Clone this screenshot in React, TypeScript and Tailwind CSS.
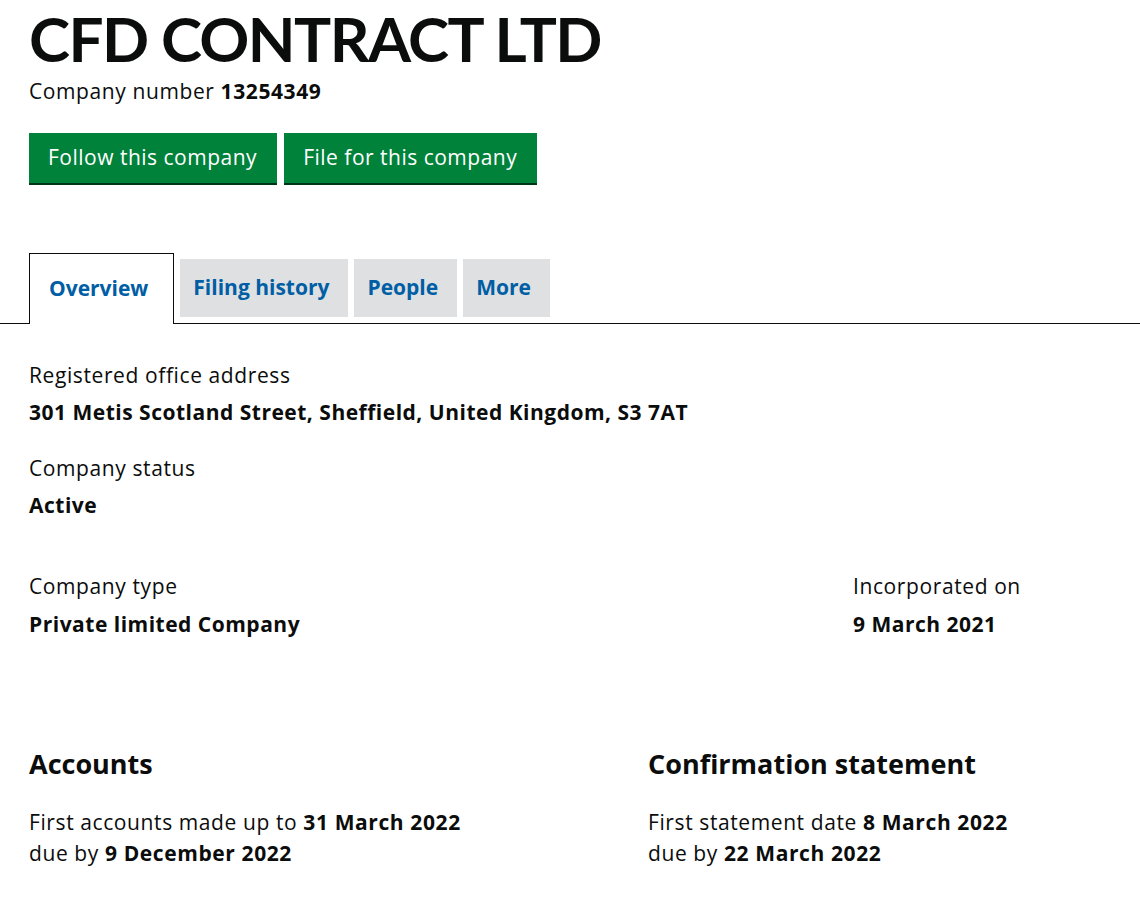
export default function App() {
  return (
    <div className="min-h-[900px] bg-white text-[#0b0c0c] font-['Open_Sans','Noto_Sans',sans-serif]">
      <div className="pl-[29px]">
        <h1 className="font-['Lato',sans-serif] text-[62px] leading-none font-bold pt-[7px] tracking-[-1.6px]">CFD CONTRACT LTD</h1>
        <p className="text-[21px] tracking-[0.6px] mt-[7px] leading-[30px]">
          Company number <strong>13254349</strong>
        </p>
        <div className="flex gap-[7px] mt-[27px]">
          <button className="h-[50px] pl-[19px] pr-[20px] bg-[#00823b] text-white text-[21px] tracking-[0.5px] shadow-[0_2px_0_#003618]">
            Follow this company
          </button>
          <button className="h-[50px] pl-[19px] pr-[20px] bg-[#00823b] text-white text-[21px] tracking-[0.5px] shadow-[0_2px_0_#003618]">
            File for this company
          </button>
        </div>
      </div>

      <div className="mt-[70px] flex items-end pl-[29px] border-b border-[#0b0c0c]">
        <div className="h-[71px] pl-[19px] pr-[25px] flex items-center border border-b-0 border-[#0b0c0c] bg-white -mb-px text-[#005ea5] font-bold text-[21px]">
          Overview
        </div>
        <div className="flex gap-[6px] ml-[6px] mb-[6px]">
          {['Filing history', 'People', 'More'].map(t => (
            <div key={t} className="h-[58px] pl-[13px] pr-[19px] flex items-center bg-[#dee0e2] text-[#005ea5] font-bold text-[21px]">
              {t}
            </div>
          ))}
        </div>
      </div>

      <div className="pl-[29px] pr-[29px] text-[21px] tracking-[0.6px]">
        <dl className="mt-[38px]">
          <dt className="leading-[26px]">Registered office address</dt>
          <dd className="font-bold leading-[26px] mt-[11px] tracking-[0.5px]">301 Metis Scotland Street, Sheffield, United Kingdom, S3 7AT</dd>
          <dt className="leading-[26px] mt-[30px]">Company status</dt>
          <dd className="font-bold leading-[26px] mt-[11px] tracking-[0.5px]">Active</dd>
        </dl>

        <div className="grid grid-cols-[824px_1fr] mt-[55px]">
          <dl>
            <dt className="leading-[26px]">Company type</dt>
            <dd className="font-bold leading-[26px] mt-[12px] tracking-[0.5px]">Private limited Company</dd>
          </dl>
          <dl>
            <dt className="leading-[26px]">Incorporated on</dt>
            <dd className="font-bold leading-[26px] mt-[12px] tracking-[0.5px]">9 March 2021</dd>
          </dl>
        </div>

        <div className="grid grid-cols-[619px_1fr] mt-[110px]">
          <div>
            <h2 className="text-[27px] tracking-normal font-bold leading-[34px]">Accounts</h2>
            <p className="mt-[26px] leading-[31px]">
              First accounts made up to <strong>31 March 2022</strong>
              <br />
              due by <strong>9 December 2022</strong>
            </p>
          </div>
          <div>
            <h2 className="text-[27px] tracking-normal font-bold leading-[34px]">Confirmation statement</h2>
            <p className="mt-[26px] leading-[31px]">
              First statement date <strong>8 March 2022</strong>
              <br />
              due by <strong>22 March 2022</strong>
            </p>
          </div>
        </div>
      </div>
    </div>
  )
}
